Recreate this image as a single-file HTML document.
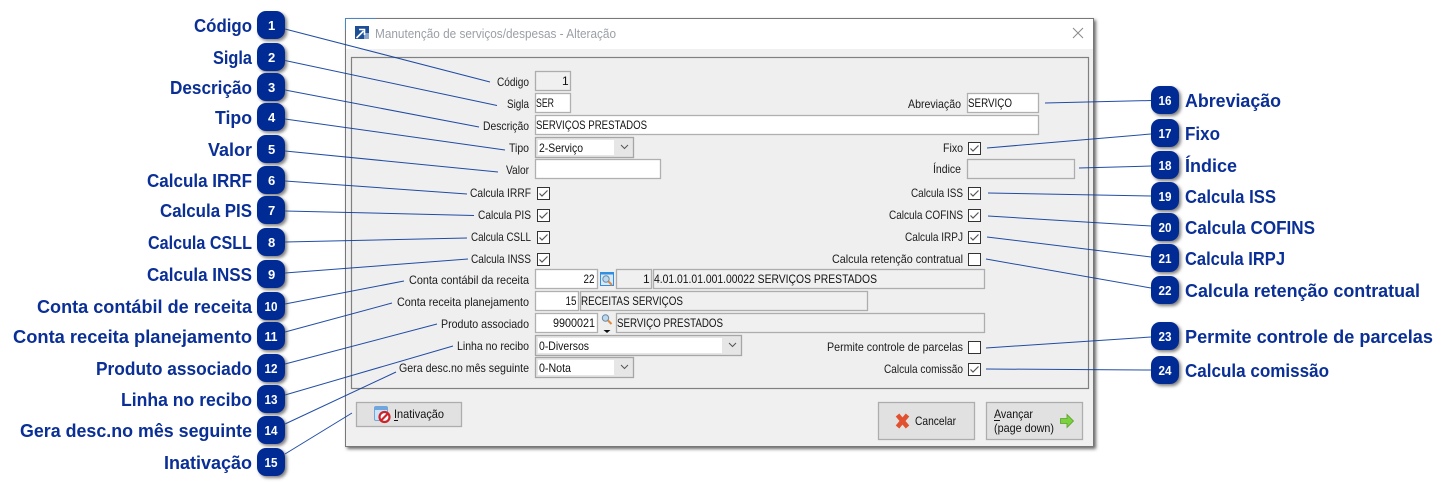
<!DOCTYPE html>
<html lang="pt-BR"><head><meta charset="utf-8"><title>Manutenção de serviços/despesas</title>
<style>
html,body{margin:0;padding:0;background:#fff;width:1449px;height:491px;overflow:hidden}
svg{display:block}
text{font-family:"Liberation Sans",sans-serif}
.c{font-size:18.5px;font-weight:700;fill:#0a2f96}
.n{font-size:13px;font-weight:700;fill:#fff}
.l{font-size:12px;fill:#1a1a1a}
.f{font-size:12px;fill:#111}
.w{fill:#fff;stroke:#b0b0b0;stroke-width:1.3}
.d{fill:#f0f0f0;stroke:#adadad;stroke-width:1.3}
.s{fill:#e6e6e6;stroke:#a6a6a6;stroke-width:1.3}
.b{fill:#e1e1e1;stroke:#adadad;stroke-width:1.3}
.k{fill:#fff;stroke:#333}
.m{fill:none;stroke:#555;stroke-width:1.2}
.v{fill:none;stroke:#555;stroke-width:1}
.r{stroke:#0a3a9c;stroke-width:1;opacity:.9}
.p{fill:#012b94;filter:url(#sh)}
</style></head><body>
<svg xmlns="http://www.w3.org/2000/svg" width="1449" height="491" viewBox="0 0 1449 491">
<defs>
<filter id="sh" x="-30%" y="-30%" width="170%" height="170%"><feDropShadow dx="2" dy="2" stdDeviation="1.5" flood-color="#555" flood-opacity=".75"/></filter>
<filter id="ws" x="-2%" y="-2%" width="104%" height="105%"><feDropShadow dx="2" dy="2" stdDeviation="1.6" flood-color="#444" flood-opacity=".8"/></filter>
<symbol id="ck" overflow="visible"><rect class="k" x=".5" y=".5" width="12" height="12"/><polyline class="m" points="2.5,6.5 5,9 10.5,3.5"/></symbol>
<symbol id="un" overflow="visible"><rect class="k" x=".5" y=".5" width="12" height="12"/></symbol>
</defs>

<!-- window -->
<rect x="345.5" y="18.5" width="748" height="428" fill="#f0f0f0" stroke="#777" filter="url(#ws)"/>
<rect x="346" y="19" width="747" height="30" fill="#fff"/>
<line x1="345" y1="18.5" x2="376" y2="18.5" stroke="#4a86c0"/>
<line x1="345.5" y1="18" x2="345.5" y2="30" stroke="#4a86c0"/>
<rect x="355" y="26" width="14" height="13" fill="#1c4f96"/>
<rect x="364" y="33" width="5" height="6" fill="#8aa6cc"/>
<polyline points="356.5,38 363.5,31" stroke="#fff" stroke-width="1.6" fill="none"/>
<polyline points="359,29.5 364.5,29.5 364.5,35" stroke="#fff" stroke-width="1.6" fill="none"/>
<text x="375" y="38" font-size="13" fill="#9a9fa5" textLength="241" lengthAdjust="spacingAndGlyphs">Manutenção de serviços/despesas - Alteração</text>
<path d="M1073 28l10 10M1083 28l-10 10" stroke="#8a8a8a" fill="none"/>
<rect x="351.5" y="57.5" width="737" height="331" fill="#efefef" stroke="#808080" stroke-width="1.2"/>

<!-- fields -->
<rect class="d" x="535.5" y="71.5" width="35" height="19"/>
<rect class="w" x="535.5" y="93.5" width="35" height="19"/>
<rect class="w" x="967.5" y="93.5" width="71" height="19"/>
<rect class="w" x="535.5" y="115.5" width="503" height="19"/>
<rect class="s" x="535.5" y="137.5" width="98" height="20"/><rect x="538" y="140" width="76" height="15" fill="#fff"/>
<path class="v" d="M621 145l3.5 3.5 3.5-3.5"/>
<rect class="w" x="535.5" y="159.5" width="125" height="19"/>
<rect class="d" x="967.5" y="159.5" width="107" height="19"/>
<rect class="w" x="535.5" y="269.5" width="62" height="19"/>
<rect x="600.5" y="272.5" width="13" height="13" fill="#dbe9f7" stroke="#2f8fe0" stroke-width="1"/>
<rect x="600" y="272" width="14" height="2.5" fill="#2f8fe0"/>
<circle cx="606" cy="279" r="3.2" fill="#bcd8ef" stroke="#6a8aa5"/><line x1="608.5" y1="281.5" x2="612" y2="285" stroke="#e08a3c" stroke-width="2"/>
<rect class="d" x="616.5" y="269.5" width="35" height="19"/>
<rect class="d" x="653.5" y="269.5" width="331" height="19"/>
<rect class="w" x="535.5" y="291.5" width="43" height="19"/>
<rect class="d" x="580.5" y="291.5" width="287" height="19"/>
<rect class="w" x="535.5" y="313.5" width="62" height="19"/>
<circle cx="605.5" cy="318" r="3.2" fill="#bcd8ef" stroke="#6a8aa5"/><line x1="608" y1="320.5" x2="611.5" y2="324" stroke="#e08a3c" stroke-width="2"/>
<path d="M603.5 330h7l-3.5 3z" fill="#111"/>
<rect class="d" x="616.5" y="313.5" width="368" height="19"/>
<rect class="s" x="535.5" y="335.5" width="206" height="20"/><rect x="538" y="338" width="184" height="15" fill="#fff"/>
<path class="v" d="M729 343l3.5 3.5 3.5-3.5"/>
<rect class="s" x="535.5" y="357.5" width="98" height="20"/><rect x="538" y="360" width="76" height="15" fill="#fff"/>
<path class="v" d="M621 365l3.5 3.5 3.5-3.5"/>

<!-- checkboxes -->
<use href="#ck" x="537" y="187"/><use href="#ck" x="537" y="209"/><use href="#ck" x="537" y="231"/><use href="#ck" x="537" y="253"/>
<use href="#ck" x="968" y="142"/><use href="#ck" x="968" y="187"/><use href="#ck" x="968" y="209"/><use href="#ck" x="968" y="231"/>
<use href="#un" x="968" y="253"/><use href="#un" x="968" y="341"/><use href="#ck" x="968" y="363"/>

<!-- field text -->
<text class="f" x="562" y="85">1</text>
<text class="f" x="536" y="107" textLength="18" lengthAdjust="spacingAndGlyphs">SER</text>
<text class="f" x="968" y="107" textLength="44" lengthAdjust="spacingAndGlyphs">SERVIÇO</text>
<text class="f" x="536" y="129" textLength="111" lengthAdjust="spacingAndGlyphs">SERVIÇOS PRESTADOS</text>
<text class="f" x="539" y="152" textLength="44" lengthAdjust="spacingAndGlyphs">2-Serviço</text>
<text class="f" x="583.5" y="283" textLength="11" lengthAdjust="spacingAndGlyphs">22</text>
<text class="f" x="643" y="283">1</text>
<text class="f" x="654" y="283" textLength="223" lengthAdjust="spacingAndGlyphs">4.01.01.01.001.00022 SERVIÇOS PRESTADOS</text>
<text class="f" x="565.5" y="305" textLength="11" lengthAdjust="spacingAndGlyphs">15</text>
<text class="f" x="581" y="305" textLength="102" lengthAdjust="spacingAndGlyphs">RECEITAS SERVIÇOS</text>
<text class="f" x="553" y="327" textLength="42" lengthAdjust="spacingAndGlyphs">9900021</text>
<text class="f" x="617" y="327" textLength="106" lengthAdjust="spacingAndGlyphs">SERVIÇO PRESTADOS</text>
<text class="f" x="539" y="350" textLength="50" lengthAdjust="spacingAndGlyphs">0-Diversos</text>
<text class="f" x="539" y="372" textLength="32" lengthAdjust="spacingAndGlyphs">0-Nota</text>

<!-- form labels -->
<text class="l" x="497" y="86" textLength="32" lengthAdjust="spacingAndGlyphs">Código</text>
<text class="l" x="507" y="108" textLength="22" lengthAdjust="spacingAndGlyphs">Sigla</text>
<text class="l" x="483" y="130" textLength="46" lengthAdjust="spacingAndGlyphs">Descrição</text>
<text class="l" x="509" y="152" textLength="20" lengthAdjust="spacingAndGlyphs">Tipo</text>
<text class="l" x="506" y="174" textLength="23" lengthAdjust="spacingAndGlyphs">Valor</text>
<text class="l" x="470" y="197" textLength="61" lengthAdjust="spacingAndGlyphs">Calcula IRRF</text>
<text class="l" x="478" y="219" textLength="53" lengthAdjust="spacingAndGlyphs">Calcula PIS</text>
<text class="l" x="471" y="241" textLength="60" lengthAdjust="spacingAndGlyphs">Calcula CSLL</text>
<text class="l" x="471" y="263" textLength="60" lengthAdjust="spacingAndGlyphs">Calcula INSS</text>
<text class="l" x="409" y="284" textLength="120" lengthAdjust="spacingAndGlyphs">Conta contábil da receita</text>
<text class="l" x="397" y="306" textLength="132" lengthAdjust="spacingAndGlyphs">Conta receita planejamento</text>
<text class="l" x="441" y="328" textLength="88" lengthAdjust="spacingAndGlyphs">Produto associado</text>
<text class="l" x="457" y="350" textLength="72" lengthAdjust="spacingAndGlyphs">Linha no recibo</text>
<text class="l" x="399" y="372" textLength="130" lengthAdjust="spacingAndGlyphs">Gera desc.no mês seguinte</text>
<text class="l" x="908" y="108" textLength="53" lengthAdjust="spacingAndGlyphs">Abreviação</text>
<text class="l" x="943" y="152" textLength="20" lengthAdjust="spacingAndGlyphs">Fixo</text>
<text class="l" x="933" y="173" textLength="28" lengthAdjust="spacingAndGlyphs">Índice</text>
<text class="l" x="911" y="197" textLength="52" lengthAdjust="spacingAndGlyphs">Calcula ISS</text>
<text class="l" x="889" y="219" textLength="74" lengthAdjust="spacingAndGlyphs">Calcula COFINS</text>
<text class="l" x="905" y="241" textLength="58" lengthAdjust="spacingAndGlyphs">Calcula IRPJ</text>
<text class="l" x="832" y="263" textLength="131" lengthAdjust="spacingAndGlyphs">Calcula retenção contratual</text>
<text class="l" x="827" y="351" textLength="136" lengthAdjust="spacingAndGlyphs">Permite controle de parcelas</text>
<text class="l" x="884" y="373" textLength="79" lengthAdjust="spacingAndGlyphs">Calcula comissão</text>

<!-- buttons -->
<rect class="b" x="356.5" y="402.5" width="105" height="24"/>
<rect x="374.5" y="406.5" width="13" height="14" rx="1.5" fill="#cfe3f7" stroke="#6fa6dc"/>
<rect x="375" y="407" width="12" height="3" fill="#6fa6dc"/>
<circle cx="384.5" cy="417" r="5" fill="#fff" stroke="#c9252b" stroke-width="2.2"/>
<line x1="381" y1="420.5" x2="388" y2="413.5" stroke="#c9252b" stroke-width="2.2"/>
<text class="f" x="394" y="418" textLength="50" lengthAdjust="spacingAndGlyphs">Inativação</text>
<line x1="394" y1="420.5" x2="398" y2="420.5" stroke="#111"/>
<rect class="b" x="878.5" y="402.5" width="96" height="37"/>
<path d="M897.5 415l10 12M907.500 415l-10 12" stroke="#e2512f" stroke-width="4.6" fill="none"/>
<text class="f" x="915" y="425" textLength="41" lengthAdjust="spacingAndGlyphs">Cancelar</text>
<rect class="b" x="986.5" y="402.5" width="96" height="37"/>
<text class="f" x="994" y="418" textLength="39" lengthAdjust="spacingAndGlyphs">Avançar</text>
<line x1="994" y1="420.5" x2="1000" y2="420.5" stroke="#111"/>
<text class="f" x="994" y="432" textLength="60" lengthAdjust="spacingAndGlyphs">(page down)</text>
<path d="M1060.500 418.500h6.500v-4l6.500 6.500-6.500 6.500v-4h-6.500z" fill="#7bd23f" stroke="#5aa02c" stroke-width=".8"/>

<!-- callout lines -->
<g class="r">
<line x1="285" y1="29" x2="490" y2="82"/>
<line x1="285" y1="60.5" x2="497" y2="105.5"/>
<line x1="285" y1="90" x2="479" y2="127"/>
<line x1="285" y1="119" x2="505" y2="150"/>
<line x1="285" y1="151" x2="498" y2="172"/>
<line x1="285" y1="181" x2="467" y2="194"/>
<line x1="285" y1="211" x2="474" y2="215.5"/>
<line x1="285" y1="242" x2="467" y2="238"/>
<line x1="285" y1="273" x2="468" y2="259"/>
<line x1="285" y1="304" x2="404" y2="281"/>
<line x1="285" y1="332" x2="392" y2="303"/>
<line x1="285" y1="364" x2="437" y2="324"/>
<line x1="285" y1="395" x2="453" y2="346"/>
<line x1="285" y1="424" x2="396" y2="372"/>
<line x1="285" y1="454" x2="352" y2="413"/>
<line x1="1045" y1="103" x2="1151" y2="100.5"/>
<line x1="987" y1="148" x2="1151" y2="134"/>
<line x1="1079" y1="168" x2="1151" y2="166"/>
<line x1="988" y1="193" x2="1151" y2="196"/>
<line x1="988" y1="216" x2="1151" y2="226"/>
<line x1="987" y1="237" x2="1151" y2="257"/>
<line x1="986" y1="259" x2="1151" y2="288"/>
<line x1="986" y1="348" x2="1151" y2="337"/>
<line x1="986" y1="369" x2="1151" y2="370"/>
</g>

<!-- left badges -->
<rect class="p" x="257" y="11" width="28" height="28" rx="9"/><text class="n" x="268" y="30" textLength="6">1</text>
<rect class="p" x="257" y="43" width="28" height="28" rx="9"/><text class="n" x="268" y="62" textLength="7">2</text>
<rect class="p" x="257" y="73" width="28" height="28" rx="9"/><text class="n" x="268" y="92" textLength="7">3</text>
<rect class="p" x="257" y="103" width="28" height="28" rx="9"/><text class="n" x="268" y="122" textLength="7">4</text>
<rect class="p" x="257" y="135" width="28" height="28" rx="9"/><text class="n" x="268" y="154" textLength="7">5</text>
<rect class="p" x="257" y="166" width="28" height="28" rx="9"/><text class="n" x="268" y="185" textLength="7">6</text>
<rect class="p" x="257" y="196" width="28" height="28" rx="9"/><text class="n" x="268" y="215" textLength="7">7</text>
<rect class="p" x="257" y="228" width="28" height="28" rx="9"/><text class="n" x="268" y="247" textLength="7">8</text>
<rect class="p" x="257" y="260" width="28" height="28" rx="9"/><text class="n" x="268" y="279" textLength="7">9</text>
<rect class="p" x="257" y="292" width="28" height="28" rx="9"/><text class="n" x="264.5" y="311" textLength="13" lengthAdjust="spacingAndGlyphs">10</text>
<rect class="p" x="257" y="322" width="28" height="28" rx="9"/><text class="n" x="264.5" y="341" textLength="13" lengthAdjust="spacingAndGlyphs">11</text>
<rect class="p" x="257" y="354" width="28" height="28" rx="9"/><text class="n" x="264.5" y="373" textLength="13" lengthAdjust="spacingAndGlyphs">12</text>
<rect class="p" x="257" y="385" width="28" height="28" rx="9"/><text class="n" x="264.5" y="404" textLength="13" lengthAdjust="spacingAndGlyphs">13</text>
<rect class="p" x="257" y="416" width="28" height="28" rx="9"/><text class="n" x="264.5" y="435" textLength="13" lengthAdjust="spacingAndGlyphs">14</text>
<rect class="p" x="257" y="448" width="28" height="28" rx="9"/><text class="n" x="264.5" y="467" textLength="13" lengthAdjust="spacingAndGlyphs">15</text>

<!-- right badges -->
<rect class="p" x="1151" y="86" width="28" height="28" rx="9"/><text class="n" x="1158.5" y="105" textLength="13" lengthAdjust="spacingAndGlyphs">16</text>
<rect class="p" x="1151" y="119" width="28" height="28" rx="9"/><text class="n" x="1158.5" y="138" textLength="13" lengthAdjust="spacingAndGlyphs">17</text>
<rect class="p" x="1151" y="151" width="28" height="28" rx="9"/><text class="n" x="1158.5" y="170" textLength="13" lengthAdjust="spacingAndGlyphs">18</text>
<rect class="p" x="1151" y="182" width="28" height="28" rx="9"/><text class="n" x="1158.5" y="201" textLength="13" lengthAdjust="spacingAndGlyphs">19</text>
<rect class="p" x="1151" y="213" width="28" height="28" rx="9"/><text class="n" x="1158.5" y="232" textLength="13" lengthAdjust="spacingAndGlyphs">20</text>
<rect class="p" x="1151" y="244" width="28" height="28" rx="9"/><text class="n" x="1158.5" y="263" textLength="13" lengthAdjust="spacingAndGlyphs">21</text>
<rect class="p" x="1151" y="276" width="28" height="28" rx="9"/><text class="n" x="1158.5" y="295" textLength="13" lengthAdjust="spacingAndGlyphs">22</text>
<rect class="p" x="1151" y="322" width="28" height="28" rx="9"/><text class="n" x="1158.5" y="341" textLength="13" lengthAdjust="spacingAndGlyphs">23</text>
<rect class="p" x="1151" y="356" width="28" height="28" rx="9"/><text class="n" x="1158.5" y="375" textLength="13" lengthAdjust="spacingAndGlyphs">24</text>

<!-- callout captions -->
<text class="c" x="194" y="32" textLength="58" lengthAdjust="spacingAndGlyphs">Código</text>
<text class="c" x="213" y="64" textLength="39" lengthAdjust="spacingAndGlyphs">Sigla</text>
<text class="c" x="170" y="94" textLength="82" lengthAdjust="spacingAndGlyphs">Descrição</text>
<text class="c" x="215" y="124" textLength="37" lengthAdjust="spacingAndGlyphs">Tipo</text>
<text class="c" x="208" y="156" textLength="44" lengthAdjust="spacingAndGlyphs">Valor</text>
<text class="c" x="147" y="187" textLength="105" lengthAdjust="spacingAndGlyphs">Calcula IRRF</text>
<text class="c" x="160" y="217" textLength="92" lengthAdjust="spacingAndGlyphs">Calcula PIS</text>
<text class="c" x="148" y="249" textLength="104" lengthAdjust="spacingAndGlyphs">Calcula CSLL</text>
<text class="c" x="147" y="281" textLength="105" lengthAdjust="spacingAndGlyphs">Calcula INSS</text>
<text class="c" x="37" y="313" textLength="215" lengthAdjust="spacingAndGlyphs">Conta contábil de receita</text>
<text class="c" x="13" y="343" textLength="239" lengthAdjust="spacingAndGlyphs">Conta receita planejamento</text>
<text class="c" x="96" y="375" textLength="156" lengthAdjust="spacingAndGlyphs">Produto associado</text>
<text class="c" x="121" y="406" textLength="131" lengthAdjust="spacingAndGlyphs">Linha no recibo</text>
<text class="c" x="20" y="437" textLength="232" lengthAdjust="spacingAndGlyphs">Gera desc.no mês seguinte</text>
<text class="c" x="164" y="469" textLength="88" lengthAdjust="spacingAndGlyphs">Inativação</text>
<text class="c" x="1185" y="107" textLength="96" lengthAdjust="spacingAndGlyphs">Abreviação</text>
<text class="c" x="1185" y="140" textLength="35" lengthAdjust="spacingAndGlyphs">Fixo</text>
<text class="c" x="1185" y="172" textLength="52" lengthAdjust="spacingAndGlyphs">Índice</text>
<text class="c" x="1185" y="203" textLength="91" lengthAdjust="spacingAndGlyphs">Calcula ISS</text>
<text class="c" x="1185" y="234" textLength="130" lengthAdjust="spacingAndGlyphs">Calcula COFINS</text>
<text class="c" x="1185" y="265" textLength="100" lengthAdjust="spacingAndGlyphs">Calcula IRPJ</text>
<text class="c" x="1185" y="297" textLength="235" lengthAdjust="spacingAndGlyphs">Calcula retenção contratual</text>
<text class="c" x="1185" y="343" textLength="248" lengthAdjust="spacingAndGlyphs">Permite controle de parcelas</text>
<text class="c" x="1185" y="377" textLength="144" lengthAdjust="spacingAndGlyphs">Calcula comissão</text>
</svg>
</body></html>
